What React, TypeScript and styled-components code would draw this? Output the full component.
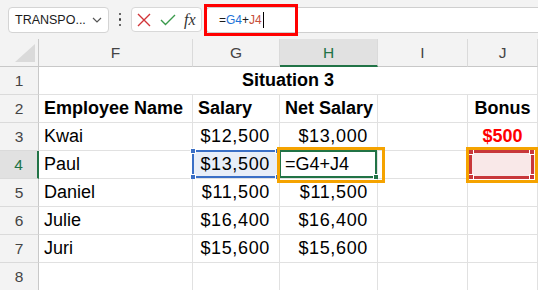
import React from 'react';
import styled, { createGlobalStyle } from 'styled-components';

const GlobalStyle = createGlobalStyle`
  html, body {
    margin: 0;
    padding: 0;
    background: #ffffff;
    overflow: hidden;
  }
  * {
    box-sizing: border-box;
  }
`;

const Page = styled.div`
  width: 538px;
  height: 290px;
  overflow: hidden;
  font-family: "Liberation Sans", Arial, sans-serif;
`;

const TopBar = styled.div`
  height: 39px;
  background: #f3f3f3;
  display: flex;
  align-items: center;
  padding-left: 8px;
`;

const NameBox = styled.div`
  width: 101px;
  height: 26px;
  background: #fff;
  border: 1px solid #d4d4d4;
  border-radius: 4px;
  display: flex;
  align-items: center;
  justify-content: space-between;
  padding: 0 6px 0 6px;
  font-size: 12.5px;
  color: #1b1b1b;
`;

const Dots = styled.div`
  width: 22px;
  display: flex;
  flex-direction: column;
  align-items: center;
  gap: 3px;

  span {
    width: 2.5px;
    height: 2.5px;
    border-radius: 50%;
    background: #3c3c3c;
  }
`;

const ActionBox = styled.div`
  width: 71px;
  height: 25px;
  background: #fff;
  border: 1px solid #d8d8d8;
  border-radius: 4px;
  display: flex;
  align-items: center;
  padding-left: 5px;
  gap: 9px;
`;

const Fx = styled.span`
  font-family: "Liberation Serif", "Times New Roman", serif;
  font-style: italic;
  font-size: 16px;
  color: #333;
  margin-left: -1px;
`;

const FormulaInput = styled.div`
  position: relative;
  flex: 1;
  height: 26px;
  margin-left: 4px;
  background: #fff;
  border: 1px solid #cfcfcf;
  border-right: none;
  border-radius: 4px 0 0 4px;
  display: flex;
  align-items: center;
  padding-left: 12px;
  font-size: 12px;
  color: #1b1b1b;
`;

const Ref = styled.span<{ $c: string }>`
  color: ${(p) => p.$c};
`;

const Caret = styled.span`
  display: inline-block;
  width: 1px;
  height: 16px;
  background: #000;
  margin-left: 1px;
`;

const RedMark = styled.div`
  position: absolute;
  left: -3px;
  top: -4px;
  width: 94px;
  height: 32px;
  border: 3px solid #ff0000;
`;

const Sheet = styled.div`
  display: grid;
  grid-template-columns: 39px 154px 87px 98px 90px 70px;
  grid-auto-rows: 28px;
`;

const Corner = styled.div`
  background: #f3f3f3;
  border-right: 1px solid #c8c8c8;
  border-bottom: 1px solid #c8c8c8;
  display: flex;
  align-items: flex-end;
  justify-content: flex-end;
  padding: 0 3px 4px 0;
`;

const ColHead = styled.div<{ $active?: boolean }>`
  background: ${(p) => (p.$active ? '#e1e1e1' : '#f3f3f3')};
  border-right: 1px solid #dadada;
  border-bottom: ${(p) => (p.$active ? '2px solid #217346' : '1px solid #c8c8c8')};
  color: ${(p) => (p.$active ? '#217346' : '#444')};
  font-size: 15.5px;
  display: flex;
  align-items: center;
  justify-content: center;
  padding-top: 1px;
`;

const RowHead = styled.div<{ $active?: boolean }>`
  background: ${(p) => (p.$active ? '#e1e1e1' : '#f3f3f3')};
  border-right: ${(p) => (p.$active ? '2px solid #217346' : '1px solid #c8c8c8')};
  border-bottom: 1px solid #dadada;
  color: ${(p) => (p.$active ? '#217346' : '#444')};
  font-size: 15.5px;
  display: flex;
  align-items: center;
  justify-content: center;
`;

type Align = 'left' | 'right' | 'center';

const Cell = styled.div<{ $align?: Align; $bold?: boolean; $color?: string; $span?: number; $num?: boolean; $fill?: string }>`
  position: relative;
  grid-column: ${(p) => (p.$span ? `span ${p.$span}` : 'auto')};
  background: ${(p) => p.$fill || '#fff'};
  border-right: 1px solid #e1e1e1;
  border-bottom: 1px solid #e1e1e1;
  display: flex;
  align-items: center;
  justify-content: ${(p) =>
    p.$align === 'right' ? 'flex-end' : p.$align === 'center' ? 'center' : 'flex-start'};
  padding: ${(p) => (p.$align === 'right' ? '0 9px 0 0' : p.$align === 'center' ? '0' : '0 0 0 5px')};
  font-size: 18px;
  font-weight: ${(p) => (p.$bold ? 700 : 400)};
  color: ${(p) => p.$color || '#000'};
  letter-spacing: ${(p) => (p.$num ? '0.65px' : '0')};
  white-space: nowrap;
`;

// reference frame drawn round a cell; inset values are offsets from the cell box
const RefFrame = styled.div<{ $c: string; $w?: number; $inset?: string }>`
  position: absolute;
  inset: ${(p) => p.$inset || '-1px 0 0 -1px'};
  border: ${(p) => p.$w || 2}px solid ${(p) => p.$c};
  pointer-events: none;
`;

const Handle = styled.span<{ $c: string; $pos: 'tl' | 'tr' | 'bl' | 'br' }>`
  position: absolute;
  width: 6px;
  height: 6px;
  background: ${(p) => p.$c};
  border: 1px solid #fff;
  ${(p) => (p.$pos[0] === 't' ? 'top: -4px;' : 'bottom: -4px;')}
  ${(p) => (p.$pos[1] === 'l' ? 'left: -4px;' : 'right: -4px;')}
`;

const Callout = styled.div<{ $l: number; $t: number; $w: number; $h: number }>`
  position: absolute;
  left: ${(p) => p.$l}px;
  top: ${(p) => p.$t}px;
  width: ${(p) => p.$w}px;
  height: ${(p) => p.$h}px;
  border: 3px solid #f5a300;
  z-index: 2;
  pointer-events: none;
`;

const cols = ['F', 'G', 'H', 'I', 'J'];

const rows = [
  { name: 'Kwai', salary: '$12,500', net: '$13,000', bonus: '$500' },
  { name: 'Paul', salary: '$13,500', net: '', bonus: '' },
  { name: 'Daniel', salary: '$11,500', net: '$11,500', bonus: '' },
  { name: 'Julie', salary: '$16,400', net: '$16,400', bonus: '' },
  { name: 'Juri', salary: '$15,600', net: '$15,600', bonus: '' },
];

const App: React.FC = () => {
  return (
    <Page>
      <GlobalStyle />
      <TopBar>
        <NameBox>
          <span>TRANSPO...</span>
          <svg width="10" height="6" viewBox="0 0 10 6">
            <path d="M1 1l4 4 4-4" fill="none" stroke="#555" strokeWidth="1.2" />
          </svg>
        </NameBox>
        <Dots>
          <span />
          <span />
          <span />
        </Dots>
        <ActionBox>
          <svg width="14" height="14" viewBox="0 0 14 14">
            <path d="M1 1l12 12M13 1L1 13" stroke="#d13438" strokeWidth="1.4" />
          </svg>
          <svg width="16" height="12" viewBox="0 0 16 12">
            <path d="M1 6l4.5 4.5L15 1" fill="none" stroke="#3b9a4c" strokeWidth="1.4" />
          </svg>
          <Fx>fx</Fx>
        </ActionBox>
        <FormulaInput>
          =<Ref $c="#1e73d8">G4</Ref>+<Ref $c="#c8503a">J4</Ref>
          <Caret />
          <RedMark />
        </FormulaInput>
      </TopBar>

      <Sheet>
        <Corner>
          <svg width="20" height="18" viewBox="0 0 20 18">
            <path d="M20 0V18H0Z" fill="#dadada" />
          </svg>
        </Corner>
        {cols.map((c) => (
          <ColHead key={c} $active={c === 'H'}>
            {c}
          </ColHead>
        ))}

        <RowHead>1</RowHead>
        <Cell $span={5} $align="center" $bold>
          Situation 3
        </Cell>

        <RowHead>2</RowHead>
        <Cell $bold>Employee Name</Cell>
        <Cell $bold>Salary</Cell>
        <Cell $bold>Net Salary</Cell>
        <Cell />
        <Cell $bold $align="center">
          Bonus
        </Cell>

        {rows.map((r, i) => {
          const n = i + 3;
          const active = n === 4;
          return (
            <React.Fragment key={n}>
              <RowHead $active={active}>{n}</RowHead>
              <Cell>{r.name}</Cell>
              <Cell $align="right" $num $fill={active ? '#e8eef8' : undefined}>
                {r.salary}
                {active && (
                  <RefFrame $c="#3a6fc6">
                    <Handle $c="#3a6fc6" $pos="tl" />
                    <Handle $c="#3a6fc6" $pos="bl" />
                    <Handle $c="#3a6fc6" $pos="tr" />
                    <Handle $c="#3a6fc6" $pos="br" />
                  </RefFrame>
                )}
              </Cell>
              {active ? (
                <Cell>
                  =G4+J4
                  <RefFrame $c="#217346">
                    <Handle $c="#217346" $pos="br" />
                  </RefFrame>
                  <Callout $l={-3} $t={-4} $w={108} $h={36} />
                </Cell>
              ) : (
                <Cell $align="right" $num>
                  {r.net}
                </Cell>
              )}
              <Cell />
              {active ? (
                <Cell $fill="#f9e8e8">
                  <RefFrame $c="#c8373a" $w={3} $inset="-1px 3px -1px 1px">
                    <Handle $c="#c8373a" $pos="tl" />
                    <Handle $c="#c8373a" $pos="tr" />
                    <Handle $c="#c8373a" $pos="bl" />
                    <Handle $c="#c8373a" $pos="br" />
                  </RefFrame>
                  <Callout $l={-2} $t={-4} $w={72} $h={36} />
                </Cell>
              ) : (
                <Cell $align="center" $bold $color="#ff0000">
                  {r.bonus}
                </Cell>
              )}
            </React.Fragment>
          );
        })}

        <RowHead>8</RowHead>
        <Cell />
        <Cell />
        <Cell />
        <Cell />
        <Cell />
      </Sheet>
    </Page>
  );
};

export default App;
